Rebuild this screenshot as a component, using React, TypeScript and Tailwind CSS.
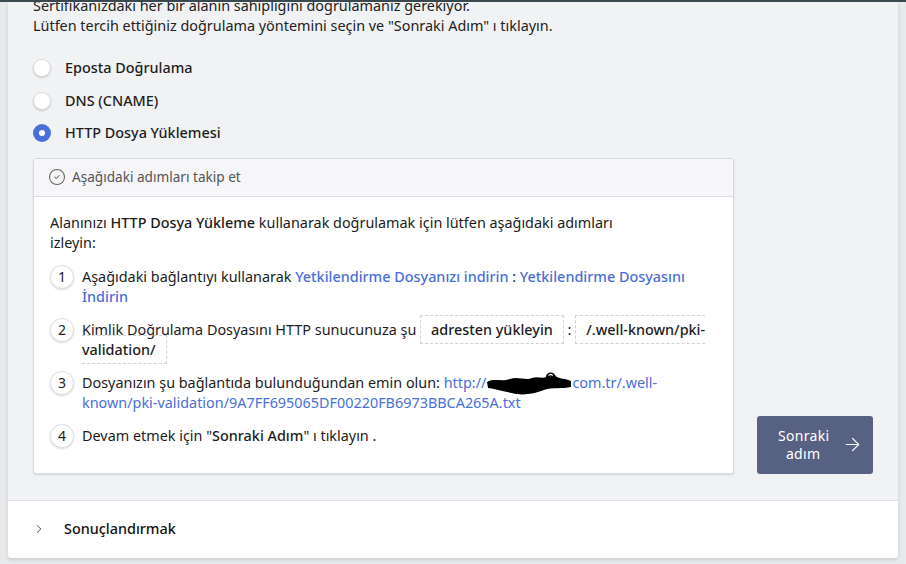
import { ArrowRight, ChevronRight, CircleCheck } from 'lucide-react';

type Method = { id: string; label: string };

const methods: Method[] = [
  { id: 'email', label: 'Eposta Doğrulama' },
  { id: 'dns', label: 'DNS (CNAME)' },
  { id: 'http', label: 'HTTP Dosya Yüklemesi' },
];

function Radio({ checked }: { checked: boolean }) {
  if (checked) {
    return (
      <span className="flex h-[18px] w-[18px] items-center justify-center rounded-full bg-[#4a6fd8]">
        <span className="h-[6px] w-[6px] rounded-full bg-white" />
      </span>
    );
  }
  return <span className="h-[18px] w-[18px] rounded-full border border-[#dcdde0] bg-white shadow-[0_1px_2px_rgba(0,0,0,0.18)]" />;
}

function StepNo({ n }: { n: number }) {
  return (
    <span className="flex h-6 w-6 shrink-0 items-center justify-center rounded-full border border-[#dedfe3] bg-white text-[14px] text-[#222] shadow-[0_1px_2px_rgba(0,0,0,0.15)]">
      {n}
    </span>
  );
}

// scribble used to hide the domain part of the url; drawn past its box so the line height stays put
function Redacted() {
  return (
    <svg width="86" height="14" viewBox="0 0 86 14" className="inline-block overflow-visible align-[-3px]">
      <path
        d="M1 5 C8 1 16 5 24 2 C32 -1 40 4 46 1 C52 -1 56 2 60 0 C60 -5 67 -6 69 -2 C71 2 78 1 85 4 L85 10 C76 12 66 10 58 13 C48 17 36 19 26 16 C16 14 9 12 2 11 Z"
        fill="#000"
      />
      <path d="M62 -1 C63 -4 67 -4 67 -1 C65 -2 64 -2 62 -1 Z" fill="#fff" />
    </svg>
  );
}

function PathBox({ children }: { children: React.ReactNode }) {
  return (
    <span className="border border-dashed border-[#cfd0d4] px-[10px] py-[4px] font-medium [box-decoration-break:slice]">
      {children}
    </span>
  );
}

export default function App() {
  return (
    <div className="flex h-screen flex-col overflow-hidden bg-[#e8e9eb] font-['Noto_Sans',sans-serif] text-[14.4px] text-[#1c1c1c]">
      <div className="relative z-10 h-[2px] shrink-0 bg-[#3a4950]" />

      <div className="mx-2 flex flex-col rounded-b-[4px] bg-[#f1f2f4] shadow-[0_2px_4px_rgba(0,0,0,0.12)]">
        <div className="px-[25px] pb-[26px]">
          <p className="-mt-[6px] leading-5 text-[#222]">
            Sertifikanızdaki her bir alanın sahipliğini doğrulamanız gerekiyor.
            <br />
            Lütfen tercih ettiğiniz doğrulama yöntemini seçin ve "Sonraki Adım" ı tıklayın.
          </p>

          <div className="mt-4 flex flex-col">
            {methods.map((m) => (
              <label key={m.id} className="flex h-[32.5px] items-center gap-[14px]">
                <Radio checked={m.id === 'http'} />
                <span className="font-medium text-[#1e1e1e]">{m.label}</span>
              </label>
            ))}
          </div>

          <div className="mt-2 flex items-end gap-[23px]">
            <div className="w-[702px] rounded-[3px] border border-[#d9dadf] bg-white shadow-[0_1px_2px_rgba(0,0,0,0.12)]">
              <div className="flex h-[38px] items-center gap-[6px] border-b border-[#dcdde2] bg-[#f6f6f8] px-[14px] text-[13.6px] text-[#555]">
                <CircleCheck size={18} strokeWidth={1.4} className="text-[#666]" />
                <span>Aşağıdaki adımları takip et</span>
              </div>

              <div className="px-4 pt-4 pb-[25px] leading-5">
                <p className="max-w-[590px]">
                  Alanınızı <span className="font-medium">HTTP Dosya Yükleme</span> kullanarak doğrulamak için lütfen aşağıdaki adımları izleyin:
                </p>

                <ol className="mt-[12px] flex flex-col gap-[11px]">
                  <li className="flex items-start gap-2">
                    <StepNo n={1} />
                    <span className="pt-0.5">
                      Aşağıdaki bağlantıyı kullanarak{' '}
                      <a className="font-medium text-[#4a6fd8]">Yetkilendirme Dosyanızı indirin</a> :{' '}
                      <a className="font-medium text-[#4a6fd8]">Yetkilendirme Dosyasını İndirin</a>
                    </span>
                  </li>
                  <li className="flex items-start gap-2">
                    <StepNo n={2} />
                    <span className="pt-0.5">
                      Kimlik Doğrulama Dosyasını HTTP sunucunuza şu <PathBox>adresten yükleyin</PathBox> :{' '}
                      <PathBox>/.well-known/pki-validation/</PathBox>
                    </span>
                  </li>
                  <li className="flex items-start gap-2">
                    <StepNo n={3} />
                    <span className="pt-0.5">
                      Dosyanızın şu bağlantıda bulunduğundan emin olun:{' '}
                      <a className="text-[#4a6fd8]">
                        http://
                        <Redacted />
                        com.tr/.well-known/pki-validation/9A7FF695065DF00220FB6973BBCA265A.txt
                      </a>
                    </span>
                  </li>
                  <li className="flex items-start gap-2">
                    <StepNo n={4} />
                    <span className="pt-0.5">
                      Devam etmek için "<span className="font-medium">Sonraki Adım</span>" ı tıklayın .
                    </span>
                  </li>
                </ol>
              </div>
            </div>

            <button className="flex h-[58px] w-[116px] items-center justify-between rounded-[3px] bg-[#576182] pl-[21px] pr-[10px] text-[14px] text-white">
              <span className="w-[50px] text-center leading-[18px] tracking-[0.3px]">Sonraki adım</span>
              <ArrowRight size={21} strokeWidth={1.4} />
            </button>
          </div>
        </div>

        <div className="flex h-[58px] items-center gap-[18px] rounded-b-[4px] border-t border-[#dfe1e6] bg-white px-[24px]">
          <ChevronRight size={14} strokeWidth={1.5} className="text-[#333]" />
          <span className="font-medium text-[#111]">Sonuçlandırmak</span>
        </div>
      </div>
    </div>
  );
}
